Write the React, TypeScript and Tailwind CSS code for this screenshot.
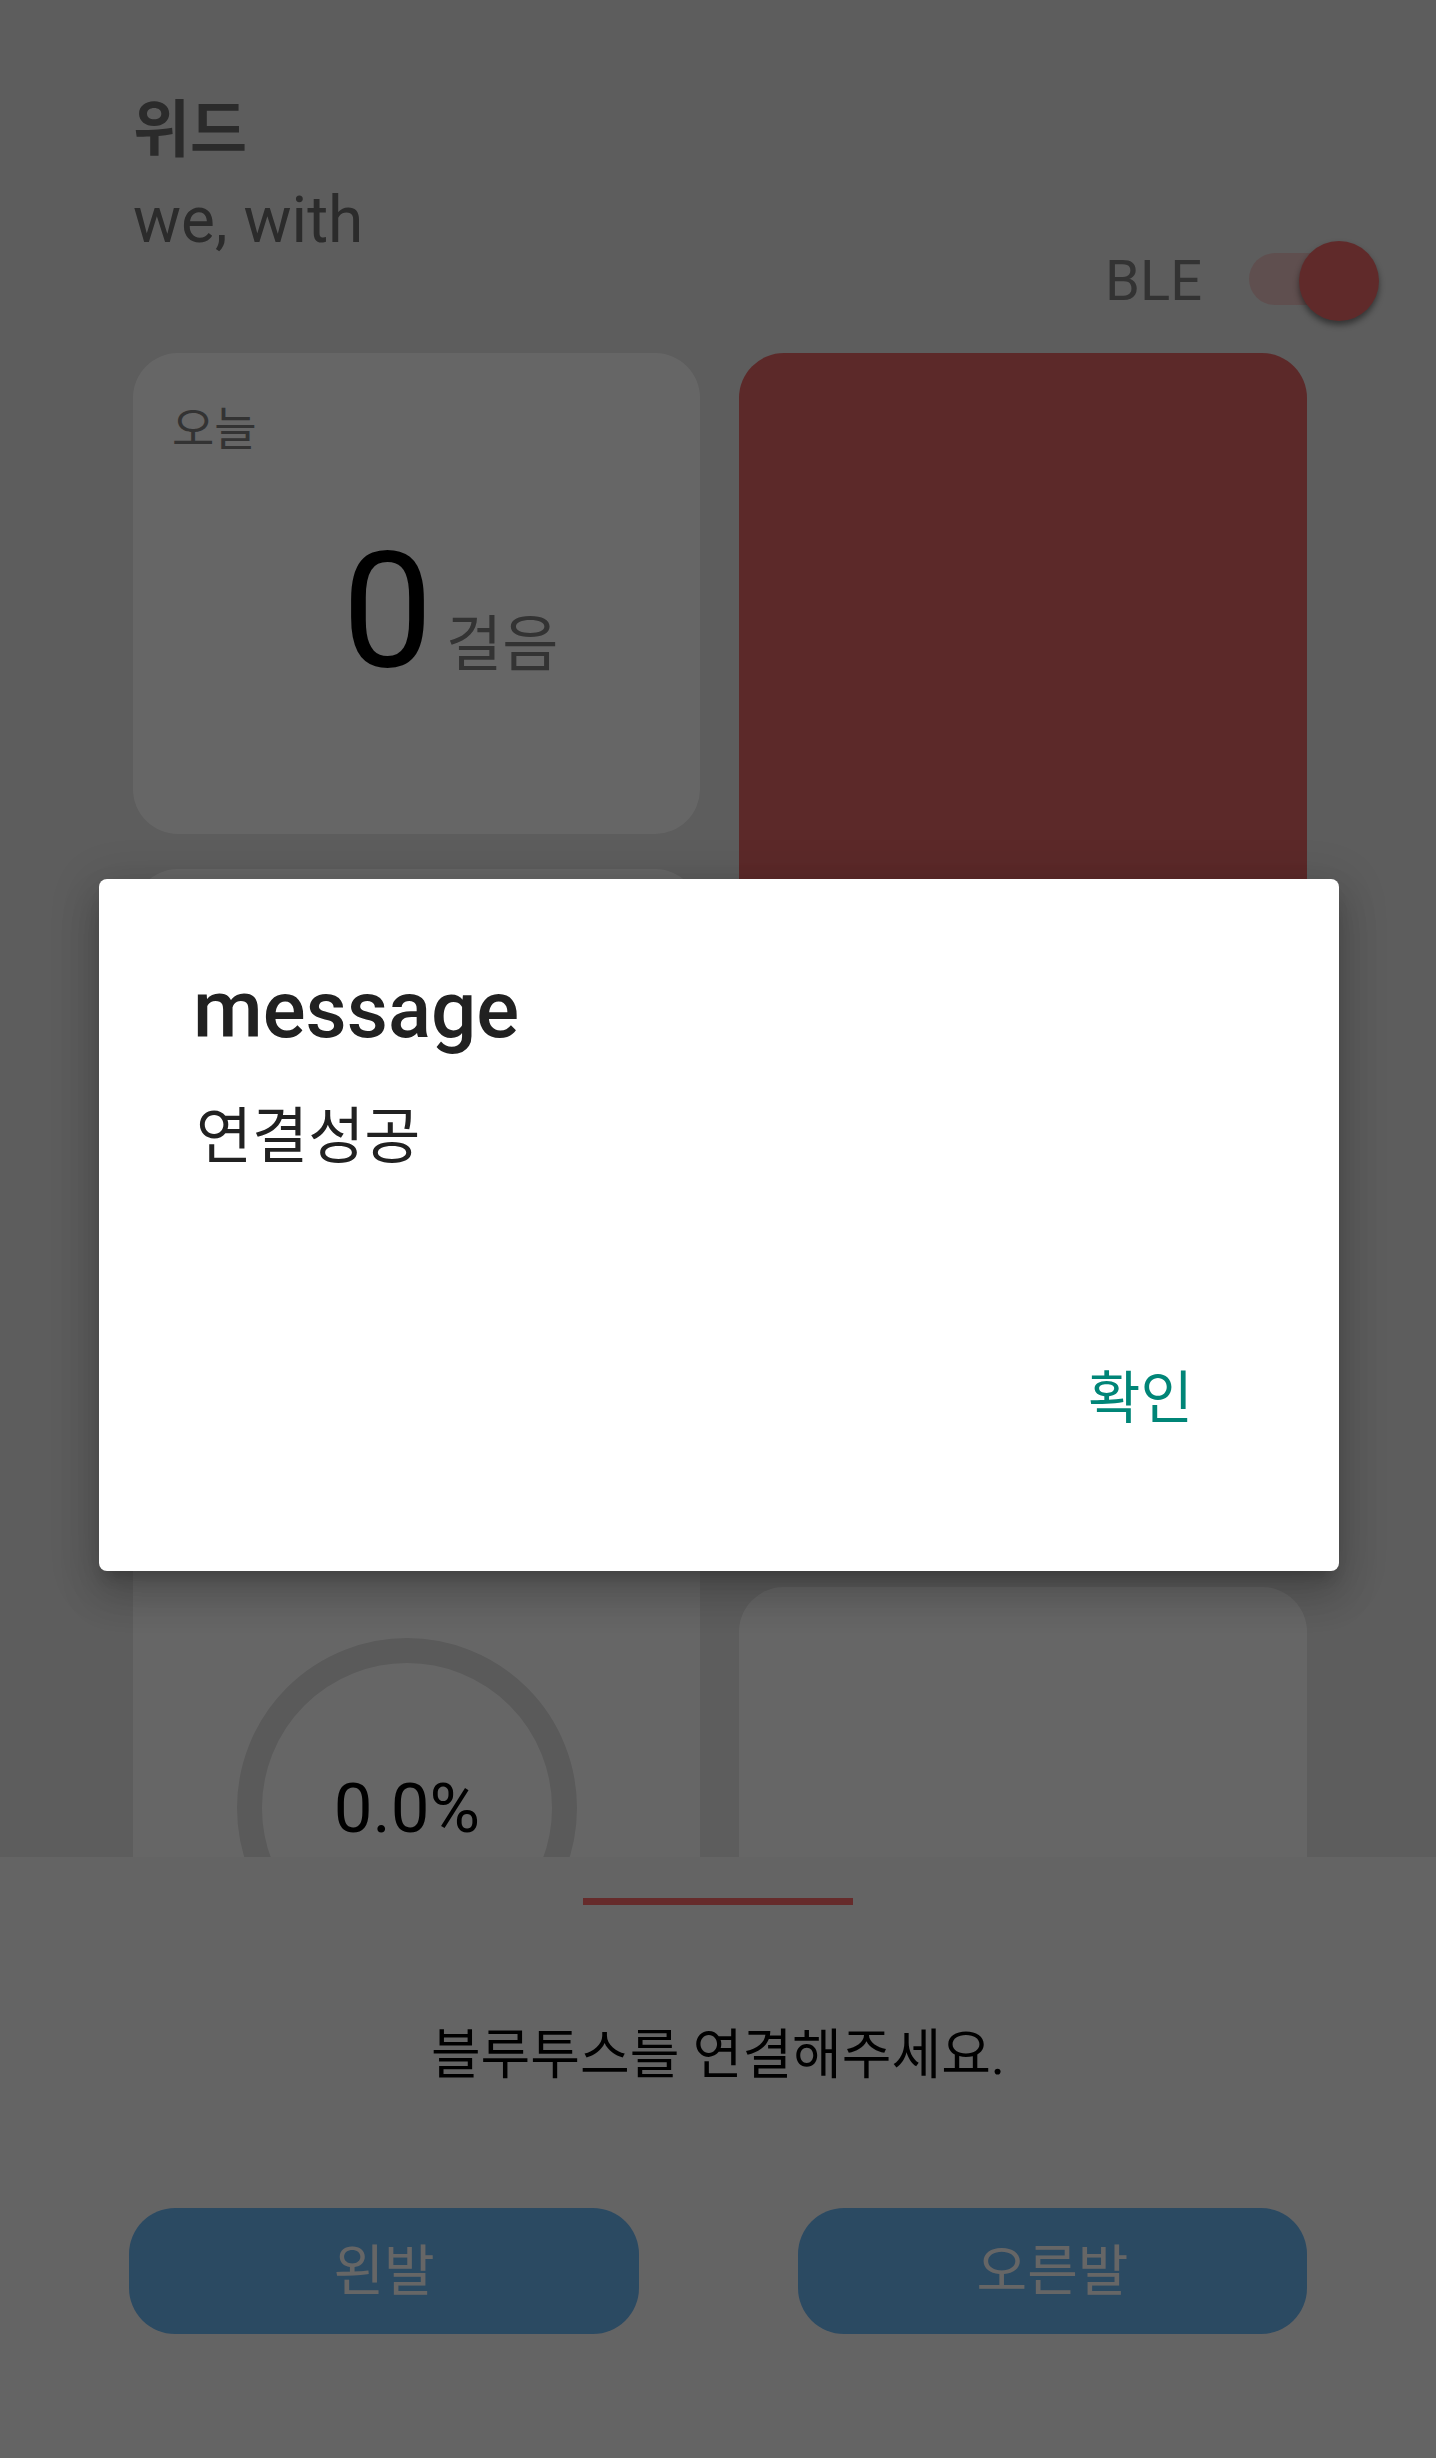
import React from 'react';

// Step counter home screen with a "connected" alert dialog on top
function BleToggle({ on }: { on: boolean }) {
  return (
    <div className="relative w-[130px] h-[80px]">
      <div className="absolute left-0 top-[12px] w-[127px] h-[52px] rounded-full bg-[#edc5c5]" />
      <div
        className={`absolute top-0 w-[80px] h-[80px] rounded-full bg-[#f06a6a] shadow-[0_4px_6px_rgba(0,0,0,0.45)] ${on ? 'right-0' : 'left-0'}`}
      />
    </div>
  );
}

function ProgressRing({ percent }: { percent: number }) {
  return (
    <div className="relative w-[340px] h-[340px]">
      <svg width="340" height="340" viewBox="0 0 340 340" className="absolute inset-0">
        <circle cx="170" cy="170" r="157.5" fill="none" stroke="#e1e1e1" strokeWidth="25" />
      </svg>
      <div className="absolute inset-0 flex items-center justify-center text-[69px] leading-none text-black">
        {percent.toFixed(1)}%
      </div>
    </div>
  );
}

export default function App() {
  return (
    <div className="relative w-[1436px] h-[2458px] overflow-hidden bg-[#e8e8e8] font-['Roboto','Noto_Sans_CJK_KR',sans-serif]">
      {/* page content */}
      <div className="pl-[133px] pr-[129px] pt-[100px]">
        <header className="flex flex-col">
          <h1 className="text-[62px] leading-none font-bold text-[#6b6b6b]">위드</h1>
          <p className="mt-[27px] text-[64px] leading-none text-[#6b6b6b]">we, with</p>
          <div className="flex justify-end items-center gap-[47px] -mt-[12px] -mr-[72px] h-[80px]">
            <span className="text-[56px] leading-none text-[#808080]">BLE</span>
            <BleToggle on />
          </div>
        </header>

        <div className="mt-[32px] flex gap-[39px]">
          <div className="flex flex-col gap-[35px] w-[567px] shrink-0">
            <section className="h-[481px] rounded-[45px] bg-white px-[39px] pt-[53px]">
              <div className="text-[46px] leading-none text-[#808080]">오늘</div>
              <div className="mt-[78px] ml-[170px] flex items-baseline">
                <span className="text-[162px] leading-none text-black">0</span>
                <span className="ml-[13px] text-[61px] leading-none text-[#808080]">걸음</span>
              </div>
            </section>
            <section className="h-[1300px] rounded-[45px] bg-white pt-[769px] pl-[104px]">
              <ProgressRing percent={0} />
            </section>
          </div>
          <div className="flex flex-col gap-[35px] w-[568px] shrink-0">
            <section className="h-[1199px] rounded-[45px] bg-[#e66666]" />
            <section className="h-[700px] rounded-[45px] bg-white" />
          </div>
        </div>
      </div>

      {/* bottom sheet */}
      <div className="absolute left-0 right-0 bottom-0 h-[601px] bg-[#fafafa] flex flex-col items-center">
        <div className="mt-[41px] w-[270px] h-[7px] bg-[#ff6b6b]" />
        <p className="mt-[124px] text-[54px] leading-none text-black">블루투스를 연결해주세요.</p>
        <div className="mt-[125px] w-full px-[129px] flex justify-between">
          <button className="w-[510px] h-[126px] rounded-[46px] bg-[#6cb8f6] text-white text-[55px] leading-none">왼발</button>
          <button className="w-[509px] h-[126px] rounded-[46px] bg-[#6cb8f6] text-white text-[55px] leading-none">오른발</button>
        </div>
      </div>

      {/* dim layer */}
      <div className="absolute inset-0 bg-black/60" />

      {/* alert dialog */}
      <div className="absolute left-[99px] top-[879px] w-[1240px] h-[692px] rounded-[8px] bg-white pl-[94px] pr-[146px] pt-[91px] shadow-[0_24px_38px_3px_rgba(0,0,0,0.14),0_9px_46px_8px_rgba(0,0,0,0.12),0_11px_15px_-7px_rgba(0,0,0,0.2)]">
        <h2 className="text-[80px] leading-none font-medium text-[#212121]">message</h2>
        <p className="mt-[57px] ml-[3px] text-[61px] leading-none text-[#212121]">연결성공</p>
        <div className="mt-[202px] flex justify-end">
          <button className="text-[57px] leading-none text-[#008577]">확인</button>
        </div>
      </div>
    </div>
  );
}
